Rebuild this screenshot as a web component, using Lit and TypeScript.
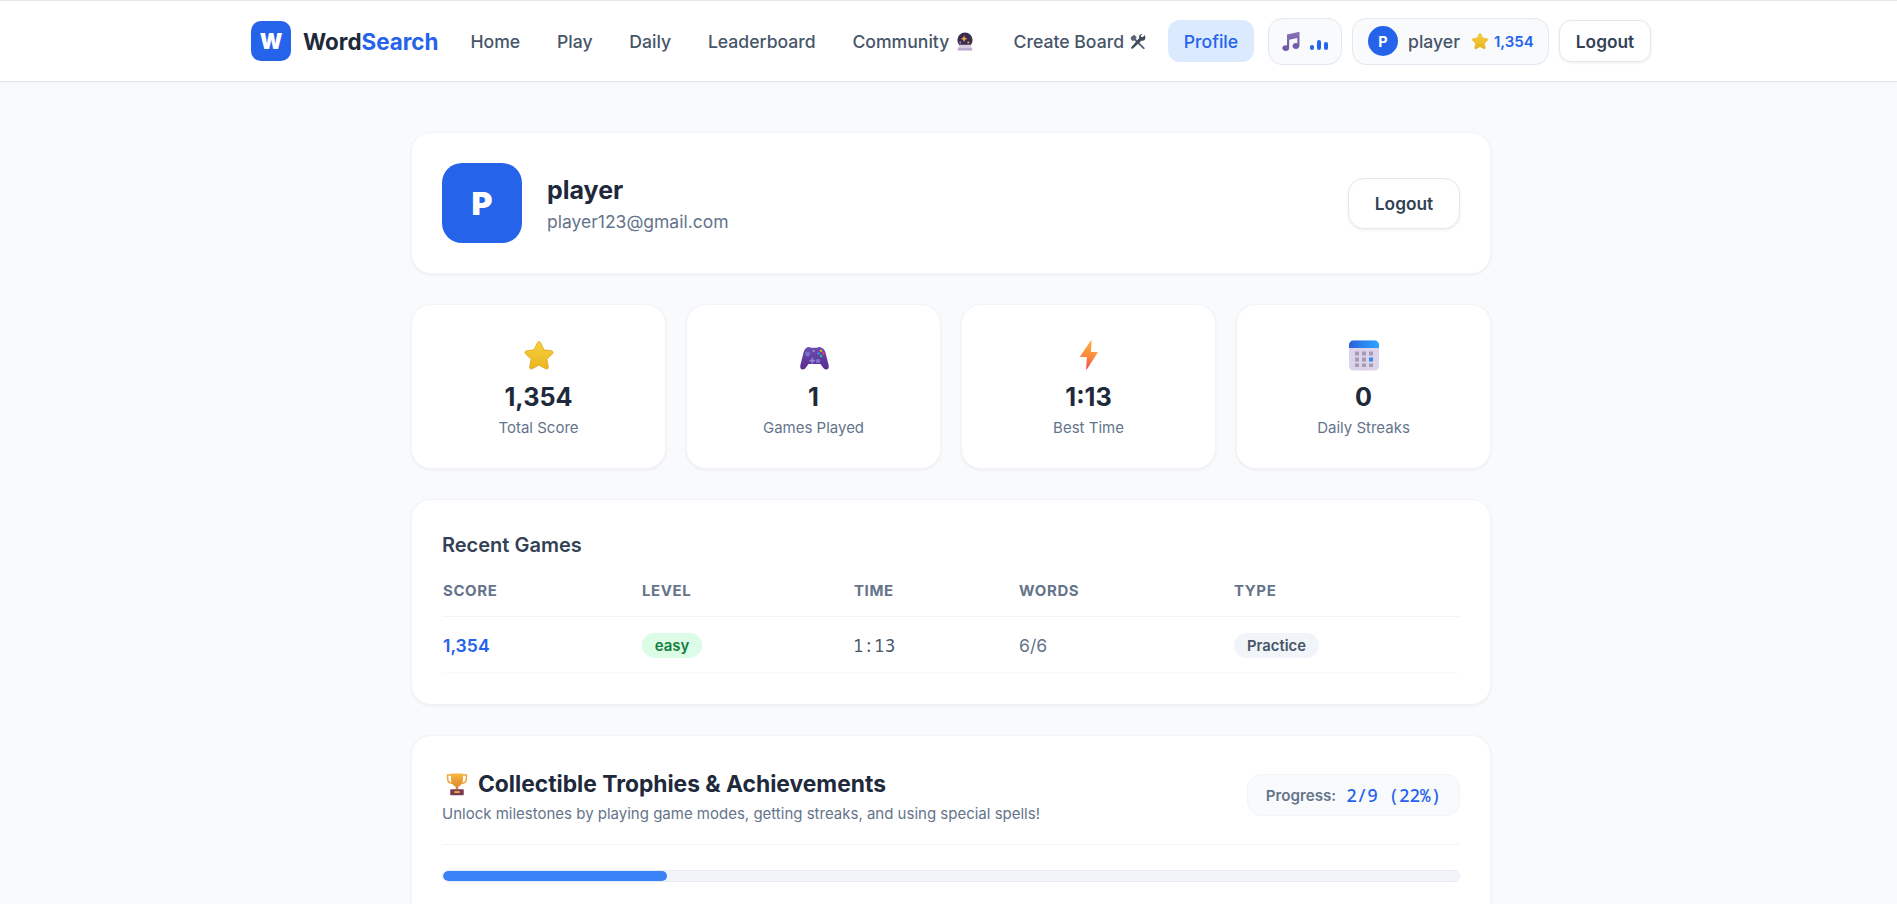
import { LitElement, html, css, svg } from "lit";
import { customElement } from "lit/decorators.js";

const star = svg`<defs><linearGradient id="st" x1="0" y1="0" x2="0" y2="1"><stop offset="0" stop-color="#f7d13c"/><stop offset="1" stop-color="#e9b51f"/></linearGradient></defs>
<path d="M16 2.600c.7 0 1.300.4 1.600 1.100l3.300 7.100 7.600 1c1.500.2 2.100 2 1 3l-5.600 5.400 1.400 7.700c.3 1.500-1.300 2.600-2.600 1.900L16 26.100l-6.700 3.700c-1.300.7-2.900-.4-2.600-1.900l1.400-7.700L2.500 14.800c-1.100-1-.5-2.800 1-3l7.600-1 3.300-7.100c.3-.7.9-1.100 1.600-1.100z" fill="url(#st)" stroke="#dda51c" stroke-width=".8"/>`;
const pad = svg`<defs><linearGradient id="gp" x1="0" y1="0" x2="0" y2="1"><stop offset="0" stop-color="#6a4fb0"/><stop offset="1" stop-color="#5a2a8f"/></linearGradient></defs>
<path d="M9 5.500c1.200-.6 2.900-.7 3.800.3h6.400c.9-1 2.600-.9 3.800-.3 2.300.6 3.800 2.300 4.500 5l3 12c.8 3.200-.2 5-2.200 5-1.700 0-2.800-1.300-4-3l-1.800-2.500H10.500L8.700 24.500c-1.200 1.700-2.300 3-4 3-2 0-3-1.800-2.200-5l3-12c.7-2.700 2.200-4.400 3.500-5z" fill="url(#gp)"/>
<circle cx="9.500" cy="12" r="2.400" fill="#7f70cf"/><circle cx="20" cy="19" r="2.200" fill="#7f70cf"/><path d="M11.500 17.800h2v-2h1.600v2h2v1.600h-2v2h-1.600v-2h-2z" fill="#8f86e0"/><circle cx="15.600" cy="9" r="1" fill="#a49bc8"/>
<circle cx="23" cy="8.800" r="1.200" fill="#f5a623"/><circle cx="20.600" cy="11.400" r="1.200" fill="#2f9fe8"/><circle cx="25.400" cy="11.400" r="1.200" fill="#ef4056"/><circle cx="23" cy="14" r="1.200" fill="#2cc38d"/>`;
const bolt = svg`<defs><linearGradient id="bt" x1=".6" y1="0" x2=".4" y2="1"><stop offset="0" stop-color="#fdb13f"/><stop offset=".55" stop-color="#fb8a3c"/><stop offset="1" stop-color="#f2494f"/></linearGradient></defs>
<path d="M17.800 1.500c.3-.3.8-.1.800.4l-.6 11.100h5.800c.6 0 .9.600.6 1.100L14 30.200c-.3.400-.8.200-.8-.3l.6-11.900H7.900c-.5 0-.8-.5-.5-1z" fill="url(#bt)"/>`;
const cal = svg`<defs><linearGradient id="cb" x1="0" y1="0" x2="1" y2="0"><stop offset="0" stop-color="#2b5fd8"/><stop offset=".5" stop-color="#2a86f2"/><stop offset="1" stop-color="#2ea3fb"/></linearGradient></defs>
<rect x="1" y="1.500" width="30" height="30" rx="4.500" fill="#dcd3ea"/><path d="M1 9V6A4.500 4.500 0 0 1 5.500 1.500h21A4.500 4.500 0 0 1 31 6V9z" fill="url(#cb)"/>
<g fill="#a59cb3"><rect x="7" y="12.500" width="4" height="4"/><rect x="14" y="12.500" width="4" height="4"/><rect x="21" y="12.500" width="4" height="4"/><rect x="7" y="18.500" width="4" height="4"/><rect x="14" y="18.500" width="4" height="4"/><rect x="7" y="24.500" width="4" height="3.500"/><rect x="14" y="24.500" width="4" height="3.500"/><rect x="21" y="24.500" width="4" height="3.500"/></g><rect x="21" y="18.500" width="4" height="4" fill="#2a8cf0"/>`;
const trophy = svg`<defs><linearGradient id="tr" x1="0" y1="0" x2="0" y2="1"><stop offset="0" stop-color="#f8b93c"/><stop offset="1" stop-color="#d9822b"/></linearGradient></defs>
<path d="M9 4H3.500v4.500C3.500 12.500 6.500 15 10.500 15M23 4h5.500v4.500c0 4-3 6.500-7 6.500" fill="none" stroke="#f0a534" stroke-width="2"/>
<path d="M8 2h16v8c0 5-3.500 8.500-6.300 9.500V23h-3.400v-3.500C11.500 18.500 8 15 8 10z" fill="url(#tr)"/>
<rect x="7" y="23" width="18" height="8" rx="1" fill="#7a3a52"/><rect x="12.500" y="25.500" width="7" height="2.500" fill="#f0b040"/>`;
const ball = svg`<circle cx="10" cy="8.500" r="8" fill="#3a2c4e"/><path d="M4 13.500h12l1.500 5h-15z" fill="#d9cde6"/><path d="M2.500 17h15v2.500h-15z" fill="#b9a8cc"/>
<path d="M9 3.500l1 2.600 2.600 1-2.600 1-1 2.600-1-2.600-2.600-1 2.600-1z" fill="#e9a84c"/><circle cx="5" cy="11" r="1" fill="#c98ad0"/><circle cx="13.500" cy="11" r="1.100" fill="#e9a84c"/>`;
const tools = svg`<path d="M1 3.500 5 .8l3 3-1.200 1.800 10.500 10.800c.8.900-.7 2.400-1.600 1.600L5 7.500 3.200 8.700.8 6z" fill="#5b6472"/><path d="M17.800 1.200l-2.700 2.600-1.900-.5-.5-1.900L15.300 0c-2.300-.6-4.500 1-4.500 3.400 0 .5.100.9.300 1.300L1.600 15.600c-1 1.200.6 2.800 1.800 1.800L13.900 7.900c2.500 1 5.100-1.300 4.300-4.100z" fill="#3f4a5a"/>`;
const note = svg`<defs><linearGradient id="nt" x1="0" y1="0" x2="0" y2="1"><stop offset="0" stop-color="#8a72b8"/><stop offset="1" stop-color="#6c57a0"/></linearGradient></defs>
<path d="M5 3.500 17.500.8v13.700c0 2-1.700 3.400-3.600 3.400s-3.400-1.300-3.400-2.900 1.500-2.900 3.400-2.900c.5 0 1 .1 1.400.3V7L7.200 8.700V17c0 1.800-1.600 3-3.500 3S.3 18.700.3 17.100s1.500-2.900 3.400-2.900c.5 0 .9.100 1.300.3z" fill="url(#nt)"/>`;

function ic(body: unknown, w: number, h: number, vb: string, cls = "") {
  return html`<svg class=${cls} width=${w} height=${h} viewBox=${vb} aria-hidden="true">${body}</svg>`;
}

const navItems = [
  { label: "Home" },
  { label: "Play" },
  { label: "Daily" },
  { label: "Leaderboard" },
  { label: "Community", icon: ic(ball, 18, 19, "1 0 18 20", "wide") },
  { label: "Create Board", icon: ic(tools, 16, 15, "0 0 19 18", "near") },
];

const stats = [
  { icon: star, vb: "0 0 32 32", label: "Total Score", value: "1,354" },
  { icon: pad, vb: "0 -3 32 32", label: "Games Played", value: "1" },
  { icon: bolt, vb: "0 0 32 32", label: "Best Time", value: "1:13" },
  { icon: cal, vb: "0 0 32 32", label: "Daily Streaks", value: "0" },
];

@customElement("app-root")
export class AppRoot extends LitElement {
  static styles = css`
    :host { display: block; height: 100vh; overflow: hidden; background: #f8fafc; color: #1e293b;
      font-family: Inter, "Liberation Sans", sans-serif; box-sizing: border-box; }
    * { box-sizing: border-box; }
    header { height: 82px; background: #fff; border-top: 1px solid #e5e7eb; border-bottom: 1px solid #e2e8f0;
      box-shadow: 0 1px 3px rgba(15,23,42,.04); padding-left: 5px; display: flex; justify-content: center; }
    .bar { width: 1400px; display: flex; align-items: center; }
    .logo { width: 40px; height: 40px; border-radius: 10px; background: #2563eb; color: #fff; font-weight: 900;
      font-size: 21px; display: flex; align-items: center; justify-content: center; margin-right: 12px; }
    .brand { font-size: 22.400px; font-weight: 700; color: #1e293b; margin-right: 16px; }
    .brand span { color: #2563eb; }
    nav { display: flex; align-items: center; gap: 4.800px; }
    .nav { height: 42px; padding: 0 16px; border-radius: 12px; font-size: 17.600px; font-weight: 500; color: #475569;
      display: flex; align-items: center; gap: 7px; white-space: nowrap; }
    .nav .wide { margin-right: 2.500px; }
    .nav .near { margin-left: -1px; margin-right: 1px; }
    .nav.on { background: #dbeafe; color: #2563eb; }
    .music { width: 74px; height: 47px; margin-left: auto; border: 1px solid #e2e8f0; background: #f8fafc; border-radius: 14px;
      display: flex; align-items: center; justify-content: center; gap: 10px; }
    .eq { display: flex; align-items: flex-end; gap: 3px; height: 11px; margin-top: 7px; }
    .eq i { width: 4px; background: #2563eb; border-radius: 2px; }
    .user { height: 47px; width: 197px; margin-left: 10px; border: 1px solid #e2e8f0; background: #f8fafc; border-radius: 14px;
      display: flex; align-items: center; padding-left: 15px; }
    .ava { width: 30px; height: 30px; border-radius: 50%; background: #2563eb; color: #fff; font-size: 14.400px; font-weight: 700;
      display: flex; align-items: center; justify-content: center; margin-right: 10px; }
    .uname { font-size: 17.600px; font-weight: 500; color: #475569; margin-right: 11px; }
    .ustar { margin-right: 5px; }
    .upts { font-size: 15px; font-weight: 600; color: #2563eb; }
    .btn { background: #fff; border: 1px solid #e2e8f0; color: #334155; font-weight: 600; font-size: 17.280px;
      display: flex; align-items: center; justify-content: center; box-shadow: 0 1px 3px rgba(15,23,42,.08); }
    .btn.small { width: 92px; height: 42px; border-radius: 12px; margin-left: 10px; }
    .btn.big { width: 112px; height: 51px; border-radius: 16px; }

    main { padding: 50px 0 0 5px; display: flex; justify-content: center; }
    .col { width: 1080px; display: flex; flex-direction: column; gap: 30px; }
    .card { background: #fff; border: 1px solid #f1f5f9; border-radius: 20px; box-shadow: 0 1px 3px rgba(15,23,42,.06); padding: 30px; }
    .head { display: flex; align-items: center; }
    .pic { width: 80px; height: 80px; border-radius: 20px; background: #2563eb; color: #fff; font-size: 32px; font-weight: 900;
      display: flex; align-items: center; justify-content: center; margin-right: 25px; }
    .who { flex: 1; padding-top: 2px; }
    .who h1 { margin: 0; font-size: 25px; line-height: 31px; font-weight: 700; color: #1e293b; }
    .who p { margin: 4px 0 0; font-size: 17.500px; line-height: 24px; color: #64748b; }

    .stats { display: grid; grid-template-columns: repeat(4, 1fr); gap: 20px; }
    .stat { height: 165px; display: flex; flex-direction: column; align-items: center; padding: 34px 0 0; }
    .stat svg { display: block; }
    .val { margin-top: 7px; font-size: 25.200px; line-height: 38px; font-weight: 700; color: #1e293b; }
    .lab { margin-top: 1px; font-size: 15px; line-height: 22px; color: #64748b; }

    .recent { height: 206px; }
    .recent h2 { margin: 0; font-size: 20px; font-weight: 600; line-height: 31px; color: #334155; }
    .row { display: grid; grid-template-columns: 200px 212px 165px 215px 1fr; }
    .row > :first-child { padding-left: 1px; }
    .row.th { height: 56px; align-items: end; padding-bottom: 14px; line-height: 22px; border-bottom: 1px solid #f1f5f9; font-size: 15px; font-weight: 700; letter-spacing: .6px; color: #64748b; }
    .row.td { height: 56px; align-items: center; padding-top: 2px; border-bottom: 1px solid #f8fafc; font-size: 17.600px; color: #64748b; }
    .pts { color: #2563eb; font-weight: 600; }
    .mono { font-family: "Noto Sans Mono", "DejaVu Sans Mono", monospace; font-size: 17.600px; color: #475569; margin: -2px 0 0 -1px; }
    .pill { display: inline-flex; align-items: center; justify-content: center; height: 25px; border-radius: 13px; font-size: 15px; font-weight: 500; vertical-align: middle; }
    .pill.easy { width: 60px; background: #dcfce7; color: #15803d; font-weight: 600; }
    .pill.type { width: 85px; background: #f1f5f9; color: #475569; font-size: 14.800px; font-weight: 600; }

    .trophies { flex: 1; min-height: 400px; }
    .thead { display: flex; align-items: flex-start; justify-content: space-between; height: 79px; border-bottom: 1px solid #f1f5f9; }
    .ttitle { display: flex; align-items: center; gap: 9px; font-size: 22.800px; line-height: 34px; font-weight: 700; color: #1e293b; padding: 1px 0 0 3px; }
    .tsub { margin-top: 2px; font-size: 15px; line-height: 22px; color: #64748b; }
    .prog { width: 213px; height: 42px; margin-top: 8px; border: 1px solid #f1f5f9; background: #f8fafc; border-radius: 14px;
      display: flex; align-items: center; justify-content: center; gap: 10px; font-size: 15.200px; font-weight: 600; color: #64748b; }
    .prog b { font-family: "Noto Sans Mono", "DejaVu Sans Mono", monospace; font-size: 17.600px; font-weight: 500; color: #2563eb; }
    .track { height: 12px; margin-top: 25px; background: #f1f5f9; border: 1px solid #e8edf4; border-radius: 6px; overflow: hidden; }
    .fill { height: 100%; background: #3b82f6; border-radius: 6px; }
  `;

  render() {
    return html`
      <header><div class="bar">
        <div class="logo">W</div>
        <div class="brand">Word<span>Search</span></div>
        <nav>
          ${navItems.map((n) => html`<div class="nav">${n.label}${n.icon ?? ""}</div>`)}
          <div class="nav on">Profile</div>
        </nav>
        <div class="music">
          ${ic(note, 18, 20, "0 0 18 20")}
          <div class="eq"><i style="height:5px"></i><i style="height:10px"></i><i style="height:8px"></i></div>
        </div>
        <div class="user">
          <div class="ava">P</div>
          <span class="uname">player</span>
          ${ic(star, 18, 18, "0 0 32 32", "ustar")}
          <span class="upts">1,354</span>
        </div>
        <div class="btn small">Logout</div>
      </div></header>
      <main><div class="col">
        <section class="card head">
          <div class="pic">P</div>
          <div class="who"><h1>player</h1><p>player123@gmail.com</p></div>
          <div class="btn big">Logout</div>
        </section>
        <section class="stats">
          ${stats.map((s) => html`<div class="card stat">
            ${ic(s.icon, 32, 32, s.vb)}
            <div class="val">${s.value}</div>
            <div class="lab">${s.label}</div>
          </div>`)}
        </section>
        <section class="card recent">
          <h2>Recent Games</h2>
          <div class="row th"><span>SCORE</span><span>LEVEL</span><span>TIME</span><span>WORDS</span><span>TYPE</span></div>
          <div class="row td">
            <span class="pts">1,354</span>
            <span><span class="pill easy">easy</span></span>
            <span class="mono">1:13</span>
            <span>6/6</span>
            <span><span class="pill type">Practice</span></span>
          </div>
        </section>
        <section class="card trophies">
          <div class="thead">
            <div>
              <div class="ttitle">${ic(trophy, 24, 24, "0 0 32 32")}<span>Collectible Trophies &amp; Achievements</span></div>
              <div class="tsub">Unlock milestones by playing game modes, getting streaks, and using special spells!</div>
            </div>
            <div class="prog">Progress: <b>2/9 (22%)</b></div>
          </div>
          <div class="track"><div class="fill" style="width:22%"></div></div>
        </section>
      </div></main>
    `;
  }
}
